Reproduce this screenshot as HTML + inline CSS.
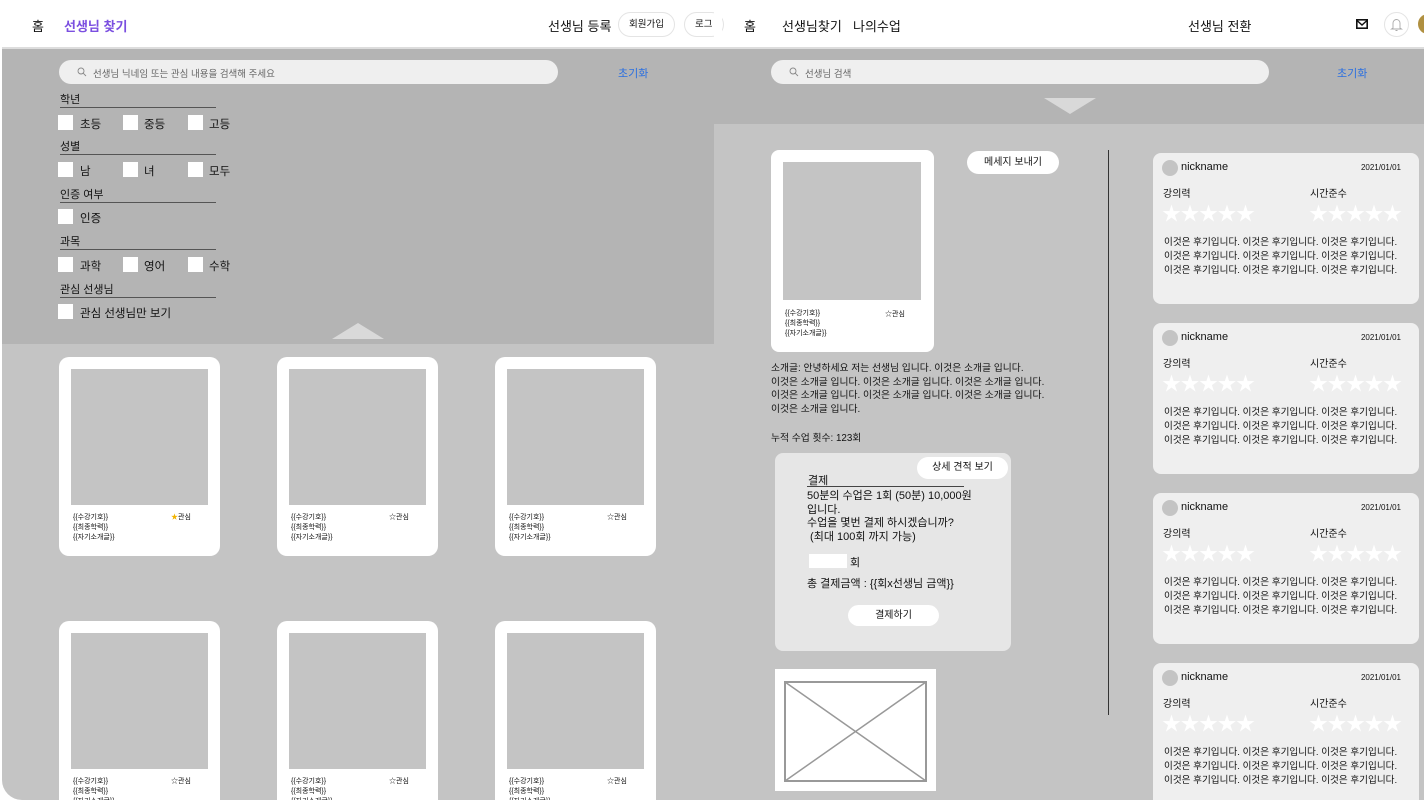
<!DOCTYPE html>
<html><head><meta charset="utf-8"><style>
*{margin:0;padding:0;box-sizing:border-box}
html,body{width:1424px;height:800px;overflow:hidden}
body{background:#fff;position:relative;font-family:"Liberation Sans","Noto Sans CJK KR",sans-serif;color:#111}
.a{position:absolute}
.t{position:absolute;white-space:nowrap}
.card{position:absolute;background:#fff;border-radius:10px;width:161px;height:199px}
.card .img{position:absolute;left:12px;top:12px;width:137px;height:136px;background:#c4c4c4}
.card .m{position:absolute;left:14px;top:156px;font-size:7px;line-height:10px}
.card .s{position:absolute;left:112px;top:156px;font-size:7px;line-height:10px}
.cb{position:absolute;width:15px;height:15px;background:#fff}
.lb{position:absolute;font-size:11.5px;white-space:nowrap}
.sec{position:absolute;left:60px;width:156px;border-bottom:1px solid #555;font-size:11px;height:15px;line-height:14px}
.rev{position:absolute;left:1153px;width:266px;height:151px;background:#efefef;border-radius:8px}
.rev .av{position:absolute;left:9px;top:7px;width:16px;height:16px;border-radius:50%;background:#c4c4c4}
.rev .nk{position:absolute;left:28px;top:8px;font-size:11px}
.rev .dt{position:absolute;right:18px;top:10px;font-size:8px}
.rev .k1{position:absolute;left:10px;top:32px;font-size:10px}
.rev .k2{position:absolute;left:157px;top:32px;font-size:10px}
.rev .st1{position:absolute;left:9px;top:46px;font-size:19px;color:#fff;letter-spacing:-0.5px}
.rev .st2{position:absolute;left:156px;top:46px;font-size:19px;color:#fff;letter-spacing:-0.5px}
.rev .tx{position:absolute;left:11px;top:83px;font-size:9.6px;line-height:14px}
</style></head><body>
<div class="a" style="left:2px;top:48px;width:712px;height:296px;background:#b4b4b4"></div>
<div class="a" style="left:2px;top:344px;width:712px;height:456px;background:#c4c4c4;border-bottom-left-radius:20px"></div>
<div class="a" style="left:2px;top:47px;width:712px;height:2px;background:#ddd"></div>
<div class="t" style="left:32px;top:16px;font-size:13px">홈</div>
<div class="t" style="left:64px;top:16px;font-size:13px;color:#7b4fe0;font-weight:bold">선생님 찾기</div>
<div class="t" style="left:548px;top:16px;font-size:13px">선생님 등록</div>
<div class="a" style="left:618px;top:12px;width:57px;height:25px;border:1px solid #e4e4e4;border-radius:13px;font-size:9.5px;text-align:center;line-height:23px">회원가입</div>
<div class="a" style="left:684px;top:12px;width:40px;height:25px;border:1px solid #e4e4e4;border-radius:13px;font-size:9.5px;line-height:23px;padding-left:10px;overflow:hidden">로그</div>
<div class="a" style="left:714px;top:0;width:8px;height:48px;background:#fff"></div>
<div class="a" style="left:59px;top:60px;width:499px;height:24px;background:#efefef;border-radius:12px"></div>
<svg class="a" style="left:77px;top:67px" width="10" height="10"><circle cx="4" cy="4" r="3" fill="none" stroke="#888" stroke-width="0.9"/><path d="M6.2 6.2 L9 9" stroke="#888" stroke-width="0.9"/></svg>
<div class="t" style="left:93px;top:66px;font-size:9.5px;color:#666">선생님 닉네임 또는 관심 내용을 검색해 주세요</div>
<div class="t" style="left:618px;top:65px;font-size:11px;color:#2b6fe0">초기화</div>

<div class="sec" style="top:93px">학년</div>
<div class="cb" style="left:58px;top:115px"></div><div class="lb" style="left:80px;top:116px">초등</div>
<div class="cb" style="left:123px;top:115px"></div><div class="lb" style="left:144px;top:116px">중등</div>
<div class="cb" style="left:188px;top:115px"></div><div class="lb" style="left:209px;top:116px">고등</div>
<div class="sec" style="top:140px">성별</div>
<div class="cb" style="left:58px;top:162px"></div><div class="lb" style="left:80px;top:163px">남</div>
<div class="cb" style="left:123px;top:162px"></div><div class="lb" style="left:144px;top:163px">녀</div>
<div class="cb" style="left:188px;top:162px"></div><div class="lb" style="left:209px;top:163px">모두</div>
<div class="sec" style="top:188px">인증 여부</div>
<div class="cb" style="left:58px;top:209px"></div><div class="lb" style="left:80px;top:210px">인증</div>
<div class="sec" style="top:235px">과목</div>
<div class="cb" style="left:58px;top:257px"></div><div class="lb" style="left:80px;top:258px">과학</div>
<div class="cb" style="left:123px;top:257px"></div><div class="lb" style="left:144px;top:258px">영어</div>
<div class="cb" style="left:188px;top:257px"></div><div class="lb" style="left:209px;top:258px">수학</div>
<div class="sec" style="top:283px">관심 선생님</div>
<div class="cb" style="left:58px;top:304px"></div><div class="lb" style="left:80px;top:305px">관심 선생님만 보기</div>
<div class="a" style="left:332px;top:323px;width:0;height:0;border-left:26px solid transparent;border-right:26px solid transparent;border-bottom:16px solid #d9d9d9"></div>

<div class="card" style="left:59px;top:357px"><div class="img"></div><div class="m">{{수강기호}}<br>{{최종학력}}<br>{{자기소개글}}</div><div class="s"><span style="color:#f2b400">★</span>관심</div></div>
<div class="card" style="left:277px;top:357px"><div class="img"></div><div class="m">{{수강기호}}<br>{{최종학력}}<br>{{자기소개글}}</div><div class="s">☆관심</div></div>
<div class="card" style="left:495px;top:357px"><div class="img"></div><div class="m">{{수강기호}}<br>{{최종학력}}<br>{{자기소개글}}</div><div class="s">☆관심</div></div>
<div class="card" style="left:59px;top:621px"><div class="img"></div><div class="m">{{수강기호}}<br>{{최종학력}}<br>{{자기소개글}}</div><div class="s">☆관심</div></div>
<div class="card" style="left:277px;top:621px"><div class="img"></div><div class="m">{{수강기호}}<br>{{최종학력}}<br>{{자기소개글}}</div><div class="s">☆관심</div></div>
<div class="card" style="left:495px;top:621px"><div class="img"></div><div class="m">{{수강기호}}<br>{{최종학력}}<br>{{자기소개글}}</div><div class="s">☆관심</div></div>

<div class="a" style="left:714px;top:48px;width:710px;height:76px;background:#b4b4b4"></div>
<div class="a" style="left:714px;top:124px;width:710px;height:676px;background:#c4c4c4"></div>
<div class="a" style="left:714px;top:47px;width:710px;height:2px;background:#ddd"></div>
<div class="t" style="left:744px;top:16px;font-size:13px">홈</div>
<div class="t" style="left:782px;top:16px;font-size:13px">선생님찾기</div>
<div class="t" style="left:853px;top:16px;font-size:13px">나의수업</div>
<div class="t" style="left:1188px;top:16px;font-size:13px">선생님 전환</div>
<svg class="a" style="left:1356px;top:19px" width="12" height="10"><rect x="0.8" y="0.8" width="10.4" height="8.4" fill="none" stroke="#111" stroke-width="1.6"/><path d="M1 1.5 L6 6 L11 1.5" fill="none" stroke="#111" stroke-width="1.4"/></svg>
<div class="a" style="left:1384px;top:12px;width:25px;height:25px;border:1px solid #e4e4e4;border-radius:50%"></div>
<svg class="a" style="left:1390px;top:17px" width="13" height="15"><path d="M3 11 V6 a3.5 3.5 0 0 1 7 0 V11 L11.5 12 H1.5 Z M5.5 13.5 h2" fill="none" stroke="#aaa" stroke-width="0.9"/></svg>
<div class="a" style="left:1418px;top:14px;width:20px;height:20px;border-radius:50%;background:#b09040"></div>
<div class="a" style="left:771px;top:60px;width:498px;height:24px;background:#efefef;border-radius:12px"></div>
<svg class="a" style="left:789px;top:67px" width="10" height="10"><circle cx="4" cy="4" r="3" fill="none" stroke="#888" stroke-width="0.9"/><path d="M6.2 6.2 L9 9" stroke="#888" stroke-width="0.9"/></svg>
<div class="t" style="left:805px;top:66px;font-size:9.5px;color:#666">선생님 검색</div>
<div class="t" style="left:1337px;top:65px;font-size:11px;color:#2b6fe0">초기화</div>
<div class="a" style="left:1044px;top:98px;width:0;height:0;border-left:26px solid transparent;border-right:26px solid transparent;border-top:16px solid #d9d9d9"></div>

<div class="a" style="left:771px;top:150px;width:163px;height:202px;background:#fff;border-radius:8px"></div>
<div class="a" style="left:783px;top:162px;width:138px;height:138px;background:#c4c4c4"></div>
<div class="t" style="left:785px;top:309px;font-size:7px;line-height:10px">{{수강기호}}<br>{{최종학력}}<br>{{자기소개글}}</div>
<div class="t" style="left:885px;top:309px;font-size:7px">☆관심</div>
<div class="a" style="left:967px;top:151px;width:92px;height:23px;background:#fff;border-radius:12px;font-size:10px;text-align:center;line-height:23px">메세지 보내기</div>
<div class="t" style="left:771px;top:362px;font-size:9.8px;line-height:13.5px">소개글: 안녕하세요 저는 선생님 입니다. 이것은 소개글 입니다.<br>이것은 소개글 입니다. 이것은 소개글 입니다. 이것은 소개글 입니다.<br>이것은 소개글 입니다. 이것은 소개글 입니다. 이것은 소개글 입니다.<br>이것은 소개글 입니다.</div>
<div class="t" style="left:771px;top:430px;font-size:9.8px">누적 수업 횟수: 123회</div>
<div class="a" style="left:1108px;top:150px;width:1px;height:565px;background:#333"></div>

<div class="a" style="left:775px;top:453px;width:236px;height:198px;background:#e6e6e6;border-radius:8px"></div>
<div class="a" style="left:917px;top:457px;width:91px;height:22px;background:#fff;border-radius:11px;font-size:10px;text-align:center;line-height:22px">상세 견적 보기</div>
<div class="t" style="left:808px;top:472px;font-size:11px">결제</div>
<div class="a" style="left:807px;top:486px;width:157px;height:1px;background:#444"></div>
<div class="t" style="left:807px;top:490px;font-size:11px;line-height:13.5px">50분의 수업은 1회 (50분) 10,000원<br>입니다.<br>수업을 몇번 결제 하시겠습니까?<br>&nbsp;(최대 100회 까지 가능)</div>
<div class="a" style="left:809px;top:554px;width:38px;height:14px;background:#fff"></div>
<div class="t" style="left:850px;top:554px;font-size:11px">회</div>
<div class="t" style="left:807px;top:575px;font-size:11px">총 결제금액 : {{회x선생님 금액}}</div>
<div class="a" style="left:848px;top:605px;width:91px;height:21px;background:#fff;border-radius:11px;font-size:10px;text-align:center;line-height:21px">결제하기</div>

<div class="a" style="left:775px;top:669px;width:161px;height:122px;background:#fff"></div>
<svg class="a" style="left:784px;top:681px" width="143" height="101"><rect x="1" y="1" width="141" height="99" fill="none" stroke="#999" stroke-width="2"/><path d="M1 1 L142 100 M142 1 L1 100" stroke="#999" stroke-width="1.5"/></svg>

<div class="rev" style="top:153px"><div class="av"></div><div class="nk">nickname</div><div class="dt">2021/01/01</div><div class="k1">강의력</div><div class="k2">시간준수</div><div class="st1">★★★★★</div><div class="st2">★★★★★</div><div class="tx">이것은 후기입니다. 이것은 후기입니다. 이것은 후기입니다.<br>이것은 후기입니다. 이것은 후기입니다. 이것은 후기입니다.<br>이것은 후기입니다. 이것은 후기입니다. 이것은 후기입니다.</div></div>
<div class="rev" style="top:323px"><div class="av"></div><div class="nk">nickname</div><div class="dt">2021/01/01</div><div class="k1">강의력</div><div class="k2">시간준수</div><div class="st1">★★★★★</div><div class="st2">★★★★★</div><div class="tx">이것은 후기입니다. 이것은 후기입니다. 이것은 후기입니다.<br>이것은 후기입니다. 이것은 후기입니다. 이것은 후기입니다.<br>이것은 후기입니다. 이것은 후기입니다. 이것은 후기입니다.</div></div>
<div class="rev" style="top:493px"><div class="av"></div><div class="nk">nickname</div><div class="dt">2021/01/01</div><div class="k1">강의력</div><div class="k2">시간준수</div><div class="st1">★★★★★</div><div class="st2">★★★★★</div><div class="tx">이것은 후기입니다. 이것은 후기입니다. 이것은 후기입니다.<br>이것은 후기입니다. 이것은 후기입니다. 이것은 후기입니다.<br>이것은 후기입니다. 이것은 후기입니다. 이것은 후기입니다.</div></div>
<div class="rev" style="top:663px"><div class="av"></div><div class="nk">nickname</div><div class="dt">2021/01/01</div><div class="k1">강의력</div><div class="k2">시간준수</div><div class="st1">★★★★★</div><div class="st2">★★★★★</div><div class="tx">이것은 후기입니다. 이것은 후기입니다. 이것은 후기입니다.<br>이것은 후기입니다. 이것은 후기입니다. 이것은 후기입니다.<br>이것은 후기입니다. 이것은 후기입니다. 이것은 후기입니다.</div></div>
</body></html>
